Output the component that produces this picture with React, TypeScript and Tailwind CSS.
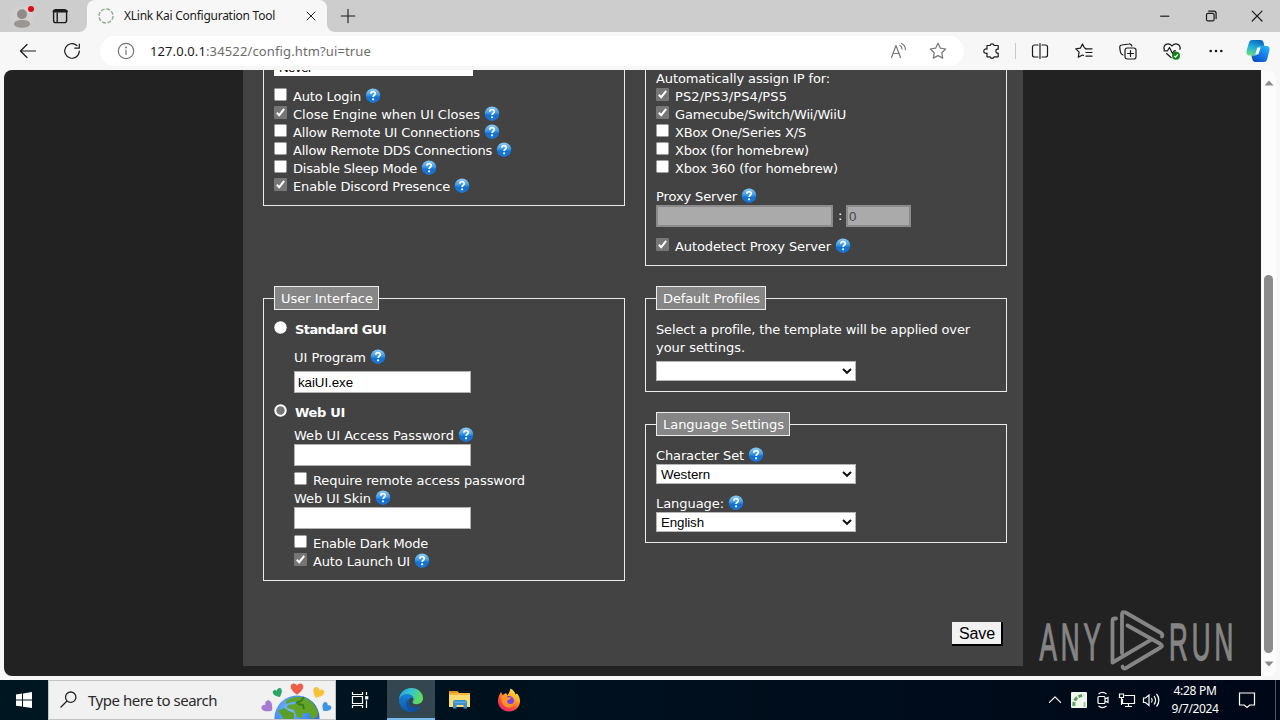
import React, { useLayoutEffect, useRef, useState } from "react";

/* Text set to an exact advance width by spreading its letters. */
function Fit({ w, children, className = "" }: { w: number; children: string; className?: string }) {
  const ref = useRef<HTMLSpanElement>(null);
  const [ls, setLs] = useState(0);
  useLayoutEffect(() => {
    if (ref.current) {
      const natural = ref.current.getBoundingClientRect().width;
      setLs((w - natural) / children.length);
    }
  }, [w, children]);
  return (
    <span ref={ref} className={`inline-block whitespace-pre ${className}`} style={{ letterSpacing: `${ls}px` }}>
      {children}
    </span>
  );
}

function Help() {
  return (
    <svg width="16" height="16" viewBox="0 0 16 16" className="shrink-0">
      <defs>
        <linearGradient id="ball" x1="0" y1="0" x2="0" y2="1">
          <stop offset="0" stopColor="#8accf6" />
          <stop offset="0.45" stopColor="#3f9ae6" />
          <stop offset="0.6" stopColor="#1272d2" />
          <stop offset="1" stopColor="#1c74d8" />
        </linearGradient>
      </defs>
      <circle cx="8" cy="7.700" r="7.200" fill="url(#ball)" />
      <path d="M5.800 5.800C5.900 3 10.300 3.100 10.300 5.600c0 1.600-2.200 1.700-2.200 3.400" fill="none" stroke="#fff" strokeWidth="1.700" />
      <circle cx="8.100" cy="11.300" r="1.100" fill="#fff" />
    </svg>
  );
}

function Check({ on }: { on?: boolean }) {
  return (
    <svg width="13" height="13" viewBox="0 0 13 13" className="mt-px mr-[6px] shrink-0 self-start">
      {on ? (
        <>
          <rect width="13" height="13" rx="1" fill="#767676" />
          <path d="M2.800 6.800 5.200 9.200 10.200 2.800" fill="none" stroke="#fff" strokeWidth="2" />
        </>
      ) : (
        <rect x="0.5" y="0.5" width="12" height="12" rx="0.8" fill="#fff" stroke="#9a9a9a" strokeWidth="0.5" />
      )}
    </svg>
  );
}

function Radio({ on }: { on?: boolean }) {
  return (
    <svg width="13" height="13" viewBox="0 0 13 13" className="mt-px mr-[8px] shrink-0 self-start">
      <circle cx="6.500" cy="6.500" r="6.200" fill="#fff" />
      {on && <circle cx="6.500" cy="6.500" r="4.200" fill="#767676" />}
    </svg>
  );
}

type RowProps = { text: string; w: number; help?: boolean; check?: boolean; radio?: boolean; className?: string };
function Row({ text, w, help, check, radio, className = "" }: RowProps) {
  const boxed = check !== undefined || radio !== undefined;
  return (
    <div className={`flex h-[18px] shrink-0 items-center ${className}`}>
      {check !== undefined && <Check on={check} />}
      {radio !== undefined && <Radio on={radio} />}
      <Fit w={boxed ? w - 1 : w} className={radio !== undefined ? "pt-[2px] font-bold" : "pt-[2px]"}>{text}</Fit>
      {help && <span className="ml-[4px] flex"><Help /></span>}
    </div>
  );
}

function Legend({ text, w, className }: { text: string; w: number; className: string }) {
  return (
    <div className={`-mt-[13px] flex h-6 items-center border border-[#ececec] bg-[#868686] pl-[6px] ${className}`}>
      <Fit w={w} className="pt-[2px]">{text}</Fit>
    </div>
  );
}

function Select({ text, w = 0, className = "" }: { text?: string; w?: number; className?: string }) {
  return (
    <div className={`flex h-5 w-[200px] items-center justify-between border border-[#b4b4b4] bg-white pl-1 pr-[3px] text-[13.3px] text-black font-['Liberation_Sans',sans-serif] ${className}`}>
      {text ? <Fit w={w} className="pt-px">{text}</Fit> : <span />}
      <svg width="10" height="8" viewBox="0 0 10 8"><path d="M1 2l4 3.800L9 2" fill="none" stroke="#111" strokeWidth="2" /></svg>
    </div>
  );
}

function Input({ text, w = 0, className = "" }: { text?: string; w?: number; className?: string }) {
  return (
    <div className={`flex h-[22px] w-[177px] items-center border border-[#b0b0b0] bg-white pl-[3px] text-[13.3px] text-black font-['Liberation_Sans',sans-serif] ${className}`}>
      {text && <Fit w={w} className="pt-[2px]">{text}</Fit>}
    </div>
  );
}

function Ico({ className = "", w = 20, children, stroke = "#1b1b1b", sw = 1.2 }: { className?: string; w?: number; children: React.ReactNode; stroke?: string; sw?: number }) {
  return (
    <svg width={w} height={w} viewBox="0 0 20 20" fill="none" stroke={stroke} strokeWidth={sw} strokeLinecap="round" strokeLinejoin="round" className={`shrink-0 ${className}`}>
      {children}
    </svg>
  );
}

function TabBar() {
  return (
    <div className="flex h-8 items-center bg-[#cdcdcd]">
      <svg width="24" height="28" viewBox="0 0 24 28" className="ml-[11px]">
        <circle cx="11" cy="15" r="11" fill="#d3d1d0" />
        <circle cx="11" cy="12.200" r="5" fill="#8e8b89" />
        <path d="M3 22c0-3 3-4 8-4s8 1 8 4c0 2-3 3.800-8 3.800S3 24 3 22z" fill="#999694" />
        <circle cx="20" cy="7" r="3" fill="#dc0a14" />
      </svg>
      <Ico className="ml-[15px]" sw={1.4}>
        <rect x="3.600" y="3.600" width="13" height="13" rx="2.200" />
        <path d="M4 5.200h12.500" strokeWidth="2.600" />
        <path d="M7.200 7v9.400" />
      </Ico>
      <div className="ml-[9px] flex h-8 w-2 items-end bg-[#f7f7f7]"><div className="h-8 w-2 rounded-br-lg bg-[#cdcdcd]" /></div>
      <div className="flex h-8 w-[240px] items-center rounded-t-lg bg-[#f7f7f7]">
        <svg width="16" height="16" viewBox="0 0 16 16" className="ml-[11px]">
          <circle cx="8" cy="8" r="7" fill="none" stroke="#91b08c" strokeWidth="1.500" strokeDasharray="3.900 1.600" />
        </svg>
        <span className="ml-[10px] text-[12px] text-[#1a1a1a] font-['Noto_Sans',sans-serif]"><Fit w={151}>XLink Kai Configuration Tool</Fit></span>
        <Ico w={16} className="ml-[28px]"><path d="M5 5l10 10M15 5L5 15" /></Ico>
      </div>
      <div className="h-8 w-2 bg-[#f7f7f7]"><div className="h-8 w-2 rounded-bl-lg bg-[#cdcdcd]" /></div>
      <Ico className="ml-[4px]" w={18}><path d="M10 2.500v15M2.500 10h15" /></Ico>
      <div className="ml-auto flex items-center gap-[26px] pr-[13px]">
        <Ico><path d="M5.200 10.200h9" strokeLinecap="butt" /></Ico>
        <Ico><rect x="5.500" y="7.300" width="7.600" height="7.600" rx="1.500" /><path d="M7.700 5.200h5a2.400 2.400 0 0 1 2.400 2.400v5" /></Ico>
        <Ico><path d="M5.200 5.200l9.800 9.800M15 5.200L5.200 15" /></Ico>
      </div>
    </div>
  );
}

function ToolBar() {
  return (
    <div className="flex h-[38px] items-center bg-[#f7f7f7]">
      <Ico className="ml-[18px]"><path d="M2.500 10h15M9 3.500L2.500 10 9 16.500" /></Ico>
      <Ico className="ml-[24px]"><path d="M17.300 10a7.300 7.300 0 1 1-2.400-5.500M17.300 3v4.200h-4.500" /></Ico>
      <div className="ml-[18px] flex h-[30px] w-[864px] items-center rounded-full bg-white pl-[16px]">
        <Ico stroke="#757575"><circle cx="10" cy="10" r="7.700" /><path d="M10 9v4.500" /><circle cx="10" cy="6.600" r=".4" /></Ico>
        <div className="ml-[14px] flex pt-px text-[13px] font-['Noto_Sans',sans-serif]">
          <span className="text-[#1a1a1a]"><Fit w={56}>127.0.0.1</Fit></span>
          <span className="text-[#6d6d6d]"><Fit w={165}>:34522/config.htm?ui=true</Fit></span>
        </div>
        <div className="ml-auto flex gap-[19px] pr-[16px]">
          <Ico stroke="#777"><path d="M2.500 16.500L7 4.500l4.500 12M4 12.500h6M11 4.500a4 4 0 0 1 2 3.500M12.500 2.500a7 7 0 0 1 4 6" /></Ico>
          <Ico stroke="#777"><path d="M10 2.300l2.400 4.900 5.300.8-3.900 3.800.9 5.300-4.700-2.500-4.700 2.500.9-5.300L2.300 8l5.300-.8z" /></Ico>
        </div>
      </div>
      <Ico className="ml-[18px]"><path d="M5 4.500h3a2.200 2.200 0 0 1 4.200 0h4v3.700h-.8a2 2 0 0 0 0 3.900h.8v3.700h-4a2.200 2.200 0 0 1-4.200 0H5v-3.700a2.200 2.200 0 1 1 0-3.900z" /></Ico>
      <div className="ml-[13px] h-4 w-px bg-[#c8c8c8]" />
      <Ico className="ml-[14px]"><path d="M8 4H4.500A2 2 0 0 0 2.500 6v8a2 2 0 0 0 2 2H8M12 4h3.500a2 2 0 0 1 2 2v8a2 2 0 0 1-2 2H12M10 2.500v15" /></Ico>
      <Ico className="ml-[24px]"><path d="M12 7.500L10.500 7 8.500 3 6.300 7.200l-4.500.7 3.300 3.300-.8 5 4.200-2.200 1 .5M11.500 7.800H18M12 11.500h6M12 15.200h6" /></Ico>
      <Ico className="ml-[24px]"><rect x="7" y="7" width="11" height="11" rx="2.200" /><path d="M12.500 9.500v6M9.500 12.500h6M5 14a4 4 0 0 1-2.700-3.500L1.800 6.800A2.200 2.200 0 0 1 3.800 4L11 3a2.400 2.400 0 0 1 2.800 2" /></Ico>
      <svg width="20" height="20" viewBox="0 0 20 20" className="ml-[24px]" fill="none" stroke="#1b1b1b" strokeWidth="1.200" strokeLinejoin="round">
        <path d="M2.500 9C.8 5.500 3.200 2.800 6 2.800c2 0 3.200 1.100 4 2.200.8-1.100 2-2.200 4-2.200 2.800 0 5.200 2.700 3.700 6M1.500 9.800h4l2-3.300 3 6 1.600-2.700h2M4.300 12.300L9.500 17" />
        <circle cx="14" cy="14.700" r="4" fill="#13821a" stroke="none" />
        <path d="M12.200 14.800l1.300 1.300 2.400-2.700" stroke="#fff" />
      </svg>
      <svg width="20" height="20" viewBox="0 0 20 20" className="ml-[24px]" fill="#1b1b1b"><circle cx="4.700" cy="10" r="1.300" /><circle cx="10" cy="10" r="1.300" /><circle cx="15.300" cy="10" r="1.300" /></svg>
      <svg width="24" height="24" viewBox="0 0 24 24" className="ml-[20px]">
        <defs>
          <linearGradient id="cp1" x1="0.6" y1="0" x2="0.2" y2="1"><stop stopColor="#0b6ab8" /><stop offset=".5" stopColor="#21b0dc" /><stop offset="1" stopColor="#6cdd7c" /></linearGradient>
          <linearGradient id="cp2" x1="1" y1="0" x2="0.3" y2="1"><stop stopColor="#29bdf0" /><stop offset=".5" stopColor="#1683ee" /><stop offset="1" stopColor="#0c4fc4" /></linearGradient>
        </defs>
        <path d="M6 1h8.500c2 0 2.700 1 3.200 3l.7 3h-3c-2 0-2.600 1-3.200 3l-1.300 4.500c-.5 1.500-1 2-2.500 2H3.500C.5 16.500 0 14 .8 11l2-7C3.500 2 4.300 1 6 1z" fill="url(#cp1)" />
        <path d="M18 23H9.500c-2 0-2.700-1-3.200-3l-.9-3.500h3.200c2 0 2.600-1 3.200-3L13.100 9c.5-1.500 1-2 2.500-2h4.900c3 0 3.500 2.500 2.700 5.500l-2 7.500c-.7 2-1.500 3-3.200 3z" fill="url(#cp2)" />
        <path d="M11.300 8.500h3.300l-2.200 6.800H9.300z" fill="#fff" />
      </svg>
    </div>
  );
}

function LeftColumn() {
  return (
    <div className="w-[362px]">
      <div className="h-[136px] border border-t-0 border-[#ececec] pl-[10px]">
        <div className="h-[6px] w-[199px] overflow-hidden bg-white pl-[5px] text-[13.3px] text-black font-['Liberation_Sans',sans-serif]">
          <div className="-mt-[10px] leading-[15px]"><Fit w={33}>Never</Fit></div>
        </div>
        <Row className="mt-[11px]" check={false} text="Auto Login" w={69} help />
        <Row check text="Close Engine when UI Closes" w={188} help />
        <Row check={false} text="Allow Remote UI Connections" w={188} help />
        <Row check={false} text="Allow Remote DDS Connections" w={200} help />
        <Row check={false} text="Disable Sleep Mode" w={125} help />
        <Row check text="Enable Discord Presence" w={158} help />
      </div>
      <div className="mt-[92px] h-[283px] border border-[#ececec] pl-[10px]">
        <Legend text="User Interface" w={92} className="w-[105px]" />
        <Row className="mt-[10px]" radio={false} text="Standard GUI" w={92} />
        <div className="pl-5">
          <Row className="mt-[10px]" text="UI Program" w={72} help />
          <Input className="mt-[5px]" text="kaiUI.exe" w={55} />
        </div>
        <Row className="mt-[10px]" radio text="Web UI" w={51} />
        <div className="pl-5">
          <Row className="mt-[5px]" text="Web UI Access Password" w={160} help />
          <Input />
          <Row className="mt-[5px]" check={false} text="Require remote access password" w={213} />
          <Row text="Web UI Skin" w={77} help />
          <Input />
          <Row className="mt-[5px]" check={false} text="Enable Dark Mode" w={116} />
          <Row check text="Auto Launch UI" w={98} help />
        </div>
      </div>
    </div>
  );
}

function RightColumn() {
  return (
    <div className="w-[362px]">
      <div className="h-[196px] border border-t-0 border-[#ececec] pl-[10px]">
        <div className="flex h-[17px] items-end">
          <Row text="Automatically assign IP for:" w={174} />
        </div>
        <Row check text="PS2/PS3/PS4/PS5" w={113} />
        <Row check text="Gamecube/Switch/Wii/WiiU" w={172} />
        <Row check={false} text="XBox One/Series X/S" w={132} />
        <Row check={false} text="Xbox (for homebrew)" w={135} />
        <Row check={false} text="Xbox 360 (for homebrew)" w={164} />
        <Row className="mt-[10px]" text="Proxy Server" w={81} help />
        <div className="flex h-[22px] items-center">
          <div className="h-[22px] w-[177px] border-2 border-[#8b8b8b] bg-[#aaaaaa]" />
          <span className="w-[13px] pl-[5px]">:</span>
          <div className="flex h-[22px] w-[65px] items-center border-2 border-[#8b8b8b] bg-[#aaaaaa] pl-px pt-px text-[13.3px] text-[#484848] font-['Liberation_Sans',sans-serif]">0</div>
        </div>
        <Row className="mt-[10px]" check text="Autodetect Proxy Server" w={157} help />
      </div>
      <div className="mt-[32px] h-[94px] border border-[#ececec] pl-[10px]">
        <Legend text="Default Profiles" w={97} className="w-[110px]" />
        <Row className="mt-[10px]" text="Select a profile, the template will be applied over" w={314} />
        <Row text="your settings." w={89} />
        <Select className="mt-[5px]" />
      </div>
      <div className="mt-[32px] h-[119px] border border-[#ececec] pl-[10px]">
        <Legend text="Language Settings" w={121} className="w-[134px]" />
        <Row className="mt-[10px]" text="Character Set" w={88} help />
        <Select text="Western" w={49} />
        <Row className="mt-[10px]" text="Language:" w={68} help />
        <Select text="English" w={43} />
      </div>
    </div>
  );
}

function Watermark() {
  return (
    <svg width="210" height="70" viewBox="1034 606 210 70" className="absolute left-[1030px] top-[536px]" fill="#858585">
      <g fontFamily="'Liberation Sans',sans-serif" fontSize="52" letterSpacing="8" stroke="#858585" strokeWidth="1.300">
        <text transform="translate(1039.500 659.500) scale(.5 1)">ANY</text>
        <text transform="translate(1169 659.500) scale(.5 1)">RUN</text>
      </g>
      <g fill="none" stroke="#858585" strokeWidth="3.800" strokeLinejoin="round" strokeLinecap="round">
        <path d="M1116 618.500h-1q-2.500 0-2.500 2.500v41.500l38-22.300" />
        <path d="M1122 653v-38.500q0-3.500 3.500-2l35.500 20.500q2 1.500 1 3.500" />
        <path d="M1127.500 625.500l33 18.500q3 2 0 3.500l-34.500 20.500q-3 1.500-3.500-1.500" />
      </g>
    </svg>
  );
}

function Taskbar() {
  return (
    <div className="flex h-10 items-center bg-linear-to-r from-[#001722] to-[#000818]">
      <svg width="48" height="40" viewBox="0 0 48 40" fill="#fff"><path d="M16 14.500l6-.9v6h-6zM23 13.400l9-1.300v7.500h-9zM16 20.600h6v6l-6-.9zM23 20.600h9v7.400l-9-1.300z" /></svg>
      <div className="flex h-10 w-[288px] items-center overflow-hidden border border-[#c2c2c2] bg-[#f1f1f1] pl-[10px]">
        <svg width="20" height="20" viewBox="0 0 20 20" fill="none" stroke="#222" strokeWidth="1.300"><circle cx="11.700" cy="7.200" r="5.200" /><path d="M8 11L1.500 17.500" /></svg>
        <span className="ml-[9px] text-[15px] text-[#2b2b2b] font-['Noto_Sans',sans-serif]"><Fit w={129}>Type here to search</Fit></span>
        <svg width="72" height="38" viewBox="260 681 72 38" className="ml-[44px] shrink-0">
          <defs>
            <radialGradient id="sea" cx=".35" cy=".3" r=".8"><stop stopColor="#78b7fb" /><stop offset=".6" stopColor="#3785e8" /><stop offset="1" stopColor="#3f51cc" /></radialGradient>
            <path id="heart" d="M0 5.500C-3.500 3-6 .5-6-2.200-6-5.800-1.700-6.300 0-3.300 1.700-6.300 6-5.800 6-2.200 6 .5 3.500 3 0 5.500z" />
          </defs>
          <circle cx="296" cy="718" r="22.500" fill="url(#sea)" />
          <path d="M285 701c5-4 13-5 18-3 6 1 12 8 14 14l-1 5-5 2-3-6-6 0-1 5-5-1-3-7-7-2 1-3 7-1 2-3-5 1-6 2z" fill="#62a425" />
          <path d="M277 711l6-3 5 3 5 2 0 7h-10l-2-4z" fill="#5a9e27" />
          <path d="M303 697l-3 4-5 2M297 704l5 1 1 4" stroke="#3c7c20" strokeWidth="2" fill="none" />
          <use href="#heart" transform="translate(296 689) scale(1.050)" fill="#ef5d48" />
          <use href="#heart" transform="translate(277 693) rotate(-25) scale(.78)" fill="#2aa567" />
          <use href="#heart" transform="translate(317 693) rotate(25) scale(.95)" fill="#f8c136" />
          <use href="#heart" transform="translate(267 707) rotate(-50) scale(.98)" fill="#a77bd4" />
          <use href="#heart" transform="translate(325 707.500) rotate(40) scale(.8)" fill="#3b95e4" />
        </svg>
      </div>
      <div className="flex w-[51px] justify-center pr-[3px]">
        <svg width="18" height="18" viewBox="0 0 18 18" fill="none" stroke="#fff" strokeWidth="1.200"><path d="M1.500 1v2.500h10V1M1.500 17v-2.500h10V17M1.500 5.500h10v7h-10zM15.500 1v3M15.500 9.500V17" /><rect x="14.700" y="5.800" width="2" height="2" fill="#fff" /></svg>
      </div>
      <div className="flex h-10 w-12 items-center justify-center border-b-2 border-[#76b9ed] bg-[#34464f]">
        <svg width="24" height="24" viewBox="0 0 24 24" className="mt-[2px]">
          <defs>
            <linearGradient id="e1" x1="0" y1="0" x2="1" y2=".3"><stop stopColor="#1a9fe0" /><stop offset=".5" stopColor="#36c3d5" /><stop offset="1" stopColor="#5fdb5b" /></linearGradient>
            <linearGradient id="e2" x1="0" y1="0" x2="0" y2="1"><stop stopColor="#1583da" /><stop offset="1" stopColor="#0b57a8" /></linearGradient>
          </defs>
          <path d="M0 12C0 5 5.500 0 12 0c7.500 0 12 5 12 10 0 4-3 6.200-6.500 6.200-2.500 0-4-.9-4-2 0-.8 1-1.200 1-3C14.500 8.500 12 6.500 8.500 6.500 4.500 6.500 1 8.500 0 12z" fill="url(#e1)" />
          <path d="M0 12c1-4 4.500-5.500 8.500-5.500 3.500 0 6 2 6 4.700-1-1.500-2-1.700-3-1.200-4.500 2.500-2 10 5 10 2.500 0 4-.8 5.200-1.500C19.500 22 16 24 12 24 5 24 0 18.500 0 12z" fill="url(#e2)" />
          <path d="M8 11c-2 4-.5 10.500 5 12.900 3.500 0 6.500-2 8.700-5.400C14 22 8.500 17 8 11z" fill="#134fa0" />
        </svg>
      </div>
      <svg width="24" height="24" viewBox="0 0 24 24" className="ml-[13px]">
        <path d="M1 3h8l2 2h11v14H1z" fill="#f1b83b" /><path d="M1 7h21v12H1z" fill="#fbdc72" /><path d="M1 3h8l2 2H1z" fill="#e09420" />
        <path d="M5 20.500V14a2 2 0 0 1 2-2h10a2 2 0 0 1 2 2v6.500h-3.500V17h-7v3.500z" fill="#3d8fcb" /><path d="M6 14.300h12" stroke="#6bb6e6" />
      </svg>
      <svg width="24" height="24" viewBox="0 0 24 24" className="ml-[25px]">
        <defs><linearGradient id="ff" x1=".8" y1="0" x2=".2" y2="1"><stop stopColor="#fff04a" /><stop offset=".35" stopColor="#ffab25" /><stop offset=".65" stopColor="#ff5039" /><stop offset="1" stopColor="#ea1e76" /></linearGradient></defs>
        <path d="M4 4l1.500 3L9 5l1.500 2.200C12 5 13 3 13.500.5c3 1.500 4.500 3.500 5 6l1.500-1c2 2.500 3 4.800 3 7.500 0 6-5 10.500-11 10.500S1 19 1 13c0-3.500 1.200-6 3-9z" fill="url(#ff)" />
        <circle cx="12" cy="13" r="5" fill="#7542e5" /><path d="M4.500 8c3-1 5 0 6.500 1.500h3.500c-1 2-3 2-4 3s0 3.500 3 3.500 4-2 3.500-5c2.500 5-1 8.500-5 8.500-5 0-8.500-5-7.500-11.500z" fill="#ff9426" />
      </svg>
      <div className="ml-auto flex h-10 items-center text-white">
        <Ico w={16} stroke="#fff" sw={1.5}><path d="M3 13l7-7 7 7" /></Ico>
        <svg width="16" height="16" viewBox="0 0 16 16" className="ml-[8px]"><rect width="16" height="16" rx="1" fill="#eef8ec" /><path d="M3 14c-1-6 3-10 10-11" stroke="#5f9b5a" strokeWidth="3" strokeDasharray="4 1.500" fill="none" /><path d="M13.500 10v5" stroke="#a4c99f" strokeWidth="2" /></svg>
        <svg width="16" height="18" viewBox="0 0 16 18" className="ml-[8px]" fill="none" stroke="#fff" strokeWidth="1.200"><rect x="3" y="5.500" width="7" height="7" rx="1" /><path d="M10 8l3-1.500v5L10 10M3.500 3C6 1 9 1 11.500 3M3.500 15c2.500 2 5.500 2 8 0" /></svg>
        <svg width="18" height="16" viewBox="0 0 18 16" className="ml-[7px]" fill="none" stroke="#fff" strokeWidth="1.200"><path d="M6.500 3.500h10v8h-12V7M10.500 11.500V14M7 14.500h7M1.500 2h4v3.500h-4zM3.500 5.500V13" /></svg>
        <svg width="18" height="16" viewBox="0 0 18 16" className="ml-[6px]" fill="none" stroke="#fff" strokeWidth="1.200"><path d="M1.500 6v4.500h2l3.500 3V3L3.500 6zM9.500 6a4 4 0 0 1 0 4.500M12 4a7 7 0 0 1 0 8.500M14.500 2a9.500 9.500 0 0 1 0 12.500" /></svg>
        <div className="ml-[9px] flex w-[52px] flex-col items-center text-[12px] leading-[18px] font-['Noto_Sans',sans-serif]"><Fit w={43}>4:28 PM</Fit><Fit w={47}>9/7/2024</Fit></div>
        <svg width="18" height="18" viewBox="0 0 18 18" className="ml-[17px]" fill="none" stroke="#fff" strokeWidth="1.200"><path d="M1.500 2h15v12h-4.700L9 16.500 6.200 14H1.500z" /></svg>
        <div className="ml-[19px] mr-[4px] h-10 w-px bg-[#4d5560]" />
      </div>
    </div>
  );
}

export default function App() {
  return (
    <div className="flex h-[720px] w-[1280px] flex-col overflow-hidden bg-[#f7f7f7]">
      <TabBar />
      <ToolBar />
      <div className="relative mb-[4px] ml-[4px] mr-[4px] flex h-[606px] overflow-hidden rounded-lg bg-[#fcfcfc]">
        <div className="w-[1257px] bg-[#222222] pl-[239px]">
          <div className="h-[596px] w-[780px] bg-[#434343] pl-5 pr-4 text-[13px] text-white font-['DejaVu_Sans',sans-serif]">
            <div className="flex justify-between">
              <LeftColumn />
              <RightColumn />
            </div>
            <div className="mt-[41px] flex justify-end">
              <div className="mr-[4px] flex h-[24px] w-[51px] items-center justify-center border-b-2 border-r-2 border-black bg-[#f2f2f2] pl-px pt-px text-[16px] text-black font-['Liberation_Sans',sans-serif]"><Fit w={36}>Save</Fit></div>
            </div>
          </div>
        </div>
        <div className="flex w-[15px] flex-col items-center">
          <svg width="10" height="6" viewBox="0 0 10 6" className="mt-[10px]" fill="#8b8b8b"><path d="M5 .5L9.500 5.500H.5z" /></svg>
          <div className="mt-[189px] h-[378px] w-[9px] rounded-full bg-[#8b8b8b]" />
          <svg width="10" height="6" viewBox="0 0 10 6" className="mt-[8px]" fill="#8b8b8b"><path d="M5 5.500L9.500.5H.5z" /></svg>
        </div>
        <Watermark />
      </div>
      <Taskbar />
    </div>
  );
}
